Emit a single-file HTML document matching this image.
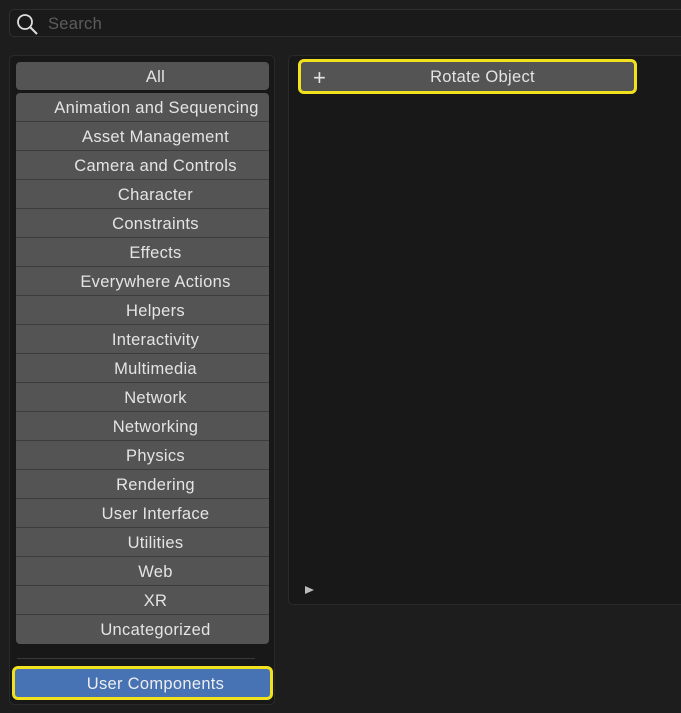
<!DOCTYPE html>
<html><head><style>
body{margin:0;width:681px;height:713px;background:#1d1d1d;font-family:"Liberation Sans",sans-serif;overflow:hidden;position:relative}
.abs{position:absolute}
.search{left:9px;top:9px;width:680px;height:28px;border:1px solid #2e2e2e;border-radius:5px;background:#1a1a1a;box-sizing:border-box}
.search span{position:absolute;left:38px;top:5px;color:#5c5c5c;font-size:16.5px;letter-spacing:0.3px}
.lp{left:9px;top:55px;width:266px;height:650px;background:#181818;border:1px solid #2a2a2a;border-radius:5px;box-sizing:border-box}
.rp{left:288px;top:55px;width:400px;height:550px;background:#181818;border:1px solid #2a2a2a;border-radius:5px;box-sizing:border-box}
.btn{position:absolute;left:16px;width:253px;background:#545454;color:#e4e4e4;font-size:16.5px;letter-spacing:0.3px;text-align:center;box-sizing:border-box;padding-left:26px;white-space:nowrap}
.list{position:absolute;left:16px;top:93px;width:253px;background:#545454;border-radius:4px;overflow:hidden}
.list div{height:28px;line-height:30px;border-bottom:1px solid #3c3c3c;text-align:center;color:#e4e4e4;font-size:16.5px;letter-spacing:0.3px;padding-left:26px;white-space:nowrap}
.list div:last-child{border-bottom:none;height:29px}
</style></head><body>
<div class="abs search"><svg class="abs" style="left:5px;top:3px" width="26" height="24" viewBox="0 0 26 24"><circle cx="10" cy="9" r="7" fill="none" stroke="#ddd" stroke-width="1.8"/><line x1="15" y1="14" x2="22" y2="21" stroke="#ddd" stroke-width="2"/></svg><span>Search</span></div>
<div class="abs lp"></div>
<div class="abs rp"></div>
<div class="btn" style="top:62px;height:28px;line-height:30px;border-radius:4px">All</div>
<div class="list">
<div style="padding-left:28px">Animation and Sequencing</div><div>Asset Management</div><div>Camera and Controls</div><div>Character</div><div>Constraints</div><div>Effects</div><div>Everywhere Actions</div><div>Helpers</div><div>Interactivity</div><div>Multimedia</div><div>Network</div><div>Networking</div><div>Physics</div><div>Rendering</div><div>User Interface</div><div>Utilities</div><div>Web</div><div>XR</div><div>Uncategorized</div>
</div>
<div class="abs" style="left:17px;top:658px;width:238px;height:1px;background:#3a3a3a"></div>
<div class="btn" style="left:12px;top:666px;width:261px;height:34px;line-height:30px;background:#4772b3;border:3px solid #f2e21e;border-radius:6px;color:#eee;padding-left:26px">User Components</div>
<div class="btn" style="left:298px;top:59px;width:339px;height:35px;line-height:31px;border:3px solid #f2e21e;border-radius:6px;padding-left:30px">Rotate Object<span style="position:absolute;left:12px;top:0px;font-size:22px;font-weight:300">+</span></div>
<div class="abs" style="left:305px;top:586px;width:0;height:0;border-left:9px solid #bbb;border-top:4px solid transparent;border-bottom:4px solid transparent"></div>
</body></html>
